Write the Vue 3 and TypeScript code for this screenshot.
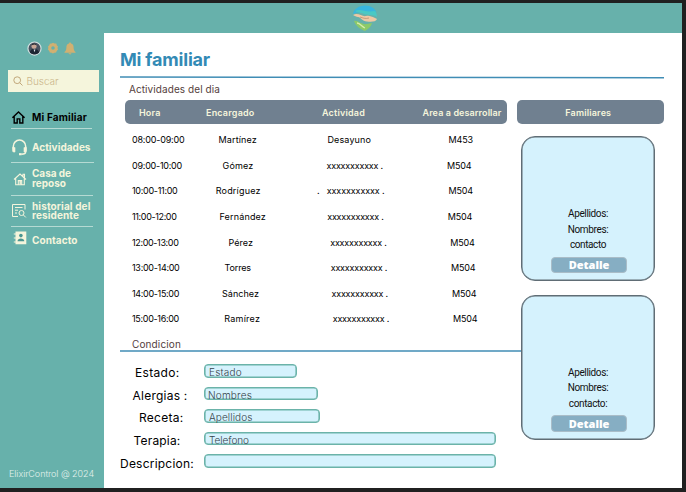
<script setup lang="ts">
interface Cell { text: string; shift: number; width: number }
interface Row { hour: string; hourWidth: number; cells: Cell[] }
interface Field { label: string; inset: number; labelWidth: number; value: string; valueWidth: number; width: number; textInset: number }

// Spreads a label's letters so that it occupies the given width.
const vFit = {
  mounted(el: HTMLElement, binding: { value: number }) {
    const natural = el.getBoundingClientRect().width
    const count = (el.textContent ?? '').length
    if (count > 0) el.style.letterSpacing = `${(binding.value - natural) / count}px`
  },
}

const makeRow = (hour: string, hourWidth: number, name: string, nameShift: number, nameWidth: number,
  activity: string, actShift: number, actWidth: number, area: string, areaShift: number): Row => ({
  hour,
  hourWidth,
  cells: [
    { text: name, shift: nameShift, width: nameWidth },
    { text: activity, shift: actShift, width: actWidth },
    { text: area, shift: areaShift, width: 24.5 },
  ],
})

const x = 'xxxxxxxxxxx .'
const rows: Row[] = [
  makeRow('08:00-09:00', 52.5, 'Martínez', 3.5, 38.5, 'Desayuno', 10.5, 43.5, 'M453', 1.5),
  makeRow('09:00-10:00', 50, 'Gómez', 7.5, 31, x, 9.5, 56.5, 'M504', 0),
  makeRow('10:00-11:00', 45.5, 'Rodríguez', 0.7, 45, '.\u00a0\u00a0\u00a0' + x, 0, 67.5, 'M504', 1.5),
  makeRow('11:00-12:00', 44.5, 'Fernández', 4.5, 46.5, x, 10.2, 56.5, 'M504', 0.7),
  makeRow('12:00-13:00', 46.5, 'Pérez', 13.5, 24.5, x, 13.2, 56.5, 'M504', 3.2),
  makeRow('13:00-14:00', 47.5, 'Torres', 9.5, 26.5, x, 13.7, 56.5, 'M504', 4),
  makeRow('14:00-15:00', 47, 'Sánchez', 7, 37, x, 14.5, 56.5, 'M504', 5),
  makeRow('15:00-16:00', 47, 'Ramírez', 9.2, 36, x, 15.7, 56.5, 'M504', 6),
]

const fields: Field[] = [
  { label: 'Estado:', inset: 15, labelWidth: 44.5, value: 'Estado', valueWidth: 33, width: 93, textInset: 4 },
  { label: 'Alergias :', inset: 12.5, labelWidth: 55, value: 'Nombres', valueWidth: 44, width: 114, textInset: 3 },
  { label: 'Receta:', inset: 19, labelWidth: 44.5, value: 'Apellidos', valueWidth: 43.5, width: 115.5, textInset: 4 },
  { label: 'Terapia:', inset: 13.5, labelWidth: 47, value: 'Telefono', valueWidth: 40, width: 292, textInset: 4 },
  { label: 'Descripcion:', inset: 0, labelWidth: 74, value: '', valueWidth: 0, width: 292, textInset: 4 },
]

const cards = [
  [{ text: 'Apellidos:', width: 40 }, { text: 'Nombres:', width: 40.5 }, { text: 'contacto', width: 36 }],
  [{ text: 'Apellidos:', width: 40 }, { text: 'Nombres:', width: 40.5 }, { text: 'contacto:', width: 38.5 }],
]
</script>

<template>
  <div class="screen">
    <header class="topbar">
      <svg class="logo" viewBox="0 0 28 28">
        <path d="M2 10C3 5 8 1.500 14 1.500c6 0 10 3 11.500 7-6-1-9 2-14 .5C8 8 5 8.500 2 10z" fill="#37b6df" />
        <path d="M4 7c6-3 10 2 20 0 1.500 2 2 4 2 6-4-3-9-1-13-3-3-1.500-7-1.500-9-3z" fill="#49c9c4" />
        <path d="M2 11c5-3 9 2 13 1 3-.8 5 .2 9 2l2 1c-1 3-6 3-10 2.500-5-.5-6-4-9-4.500-2-.4-3-1-5-2z" fill="#efc8a4" />
        <path d="M9 13c3 1 5 2 9 1" fill="none" stroke="#b98f70" stroke-width=".8" />
        <path d="M3 17c4-1 7 4 13 3l5-1c-1 4-4 6-7 8-5-2-9-5-11-10z" fill="#8dca68" />
        <path d="M6 19c3 0 5 4 8 5" fill="none" stroke="#d9edab" stroke-width="1.300" />
      </svg>
    </header>
    <div class="body">
      <aside class="sidebar">
        <div class="tools">
          <svg class="avatar" viewBox="0 0 16 16">
            <circle cx="8" cy="8" r="7" fill="#495260" stroke="#d5e3e3" stroke-width="1.200" />
            <path d="M3 12c1-3 3-4 5-3 3-1 4 1 5 3-2 3-8 3-10 0z" fill="#1c2633" />
            <circle cx="7.500" cy="5.500" r="2.700" fill="#c9a797" />
            <path d="M5 4.500c0-2.500 5-2.500 5 0l-2-.7z" fill="#252932" />
            <path d="M7 9l1 3 1-3z" fill="#dfe5ec" />
          </svg>
          <svg class="gear" viewBox="0 0 12 12">
            <path fill-rule="evenodd" fill="#d1b071" d="M4.500 1.500L6 .7l1.500.8 1.800.1.500 1.700 1.200 1.300-.5 1.400.5 1.600L9.700 9l-.6 1.600-1.700.1L6 11.500l-1.500-.8-1.700-.2L2.300 9 .9 7.500 1.400 6 1 4.500l1.300-1.200.5-1.600zM6 4.200a1.800 1.800 0 1 0 0 3.600 1.800 1.800 0 0 0 0-3.600z" />
          </svg>
          <svg class="bell" viewBox="0 0 12 13">
            <path fill="#d1b071" d="M6 .6c.7 0 1 .5 1 1 2 .5 2.600 2 2.600 3.800 0 2.300.7 3.400 1.900 4.500v.8H.5v-.8c1.200-1.100 1.900-2.200 1.900-4.500C2.400 3.600 3 2.100 5 1.600c0-.5.300-1 1-1zM4.600 11.200h2.800c0 1.600-2.800 1.600-2.800 0z" />
          </svg>
        </div>
        <div class="search">
          <svg viewBox="0 0 10 10"><circle cx="4.200" cy="4.200" r="3.400" /><path d="M6.700 6.700L9.500 9.500" /></svg>
          <span v-fit="32">Buscar</span>
        </div>
        <nav class="nav">
          <a class="item home active">
            <svg viewBox="0 0 16 16" fill="none" stroke="#000" stroke-width="1.500"><path d="M1.500 8.300L8 2.200l6.500 6.100M3.400 7v6.800h3.200V9.500h2.800v4.300h3.200V7" /></svg>
            <span v-fit="55">Mi Familiar</span>
          </a>
          <a class="item activities">
            <svg viewBox="0 0 16 16" fill="none" stroke="#f5f5dc" stroke-width="1.400"><path d="M2.200 9V6.800a5.800 5.800 0 0 1 11.600 0V12q0 2.300-4 2.300" /><path d="M1.400 8h2.400v4.300H2.700q-1.300 0-1.300-1.300zM14.600 8h-2.400v4.300h1.100q1.300 0 1.300-1.300z" fill="#f5f5dc" stroke-width=".5" /><path d="M7.500 14.300h2.500" stroke-width="2" /></svg>
            <span v-fit="58.5">Actividades</span>
          </a>
          <a class="item house">
            <svg viewBox="0 0 14 14" fill="none" stroke="#f5f5dc" stroke-width="1.100"><path d="M1 7.500L7 2l6 5.500M2.700 6.400v6.400h8.600V6.400M5.300 12.500V8.600h3.400v3.900M10 4.300V2.300h1.500v3.500" /><path d="M6.500 9h1.400v3.500H6.500z" fill="#f5f5dc" stroke="none" /></svg>
            <span class="stack"><span v-fit="39">Casa de</span><span v-fit="34">reposo</span></span>
          </a>
          <a class="item history">
            <svg viewBox="0 0 16 16" fill="none" stroke="#f5f5dc" stroke-width="1"><path d="M7 13.500H1.500v-12h12.500v5M4 4.500h7.500M4 7.200h3M4 10h2" /><circle cx="10.500" cy="10" r="2.500" /><path d="M12.300 11.900l2.500 2.500" /></svg>
            <span class="stack"><span v-fit="58.500">historial del</span><span v-fit="47">residente</span></span>
          </a>
          <a class="item contact">
            <svg viewBox="0 0 14 14"><path d="M2.500.5h10.800v12.800H2.500v-1.800H.8v-1h1.700v-3H.8v-1h1.700v-3H.8v-1h1.700z" fill="#f5f5dc" /><circle cx="7.900" cy="4.600" r="1.800" fill="#4a9691" /><path d="M4.500 10.200c0-3.600 6.800-3.600 6.800 0z" fill="#4a9691" /></svg>
            <span v-fit="45.500">Contacto</span>
          </a>
        </nav>
        <footer class="copyright"><span v-fit="85">ElixirControl @ 2024</span></footer>
      </aside>
      <main class="content">
        <h1><span v-fit="90">Mi familiar</span></h1>
        <svg class="title-rule" viewBox="0 0 544 3" preserveAspectRatio="none"><path d="M0 1.100L544 1.700" stroke="#408db5" stroke-width="1.500" /></svg>
        <div class="columns">
          <div class="left">
            <h2 class="day"><span v-fit="91">Actividades del dia</span></h2>
            <div class="table-head">
              <span v-fit="21.500">Hora</span><span v-fit="48.500">Encargado</span><span v-fit="43">Actividad</span><span v-fit="79">Area a desarrollar</span>
            </div>
            <div class="rows">
              <div v-for="row in rows" :key="row.hour" class="row">
                <div><span v-fit="row.hourWidth">{{ row.hour }}</span></div>
                <div v-for="(cell, i) in row.cells" :key="i" :style="{ paddingLeft: cell.shift + 'px' }"><span v-fit="cell.width">{{ cell.text }}</span></div>
              </div>
            </div>
            <h2 class="condition"><span v-fit="49">Condicion</span></h2>
            <svg class="condition-rule" viewBox="0 0 402 2"><path d="M0 1H402" stroke="#408db5" stroke-width="1.500" /></svg>
            <form class="form">
              <div v-for="field in fields" :key="field.label" class="field">
                <label :style="{ paddingLeft: field.inset + 'px' }"><span v-fit="field.labelWidth">{{ field.label }}</span></label>
                <div class="box" :style="{ width: field.width + 'px', paddingLeft: field.textInset + 'px' }"><span v-if="field.value" v-fit="field.valueWidth">{{ field.value }}</span></div>
              </div>
            </form>
          </div>
          <section class="family">
            <div class="family-head"><span v-fit="46">Familiares</span></div>
            <article v-for="(card, i) in cards" :key="i" class="card">
              <p v-for="line in card" :key="line.text"><span v-fit="line.width">{{ line.text }}</span></p>
              <button type="button"><span v-fit="40.500">Detalle</span></button>
            </article>
          </section>
        </div>
      </main>
    </div>
  </div>
</template>

<style>
body { margin: 0; background: #202020; }
</style>

<style scoped>
* { box-sizing: border-box; }
.screen {
  width: 686px; height: 492px; padding: 2.500px 4px 4px 0; background: #202020;
  display: flex; flex-direction: column; overflow: hidden;
  font-family: Inter, "Open Sans", sans-serif; color: #111;
}
span { white-space: pre; }
.topbar { height: 30.500px; flex: none; background: #67b1ab; display: flex; justify-content: center; padding-left: 48px; }
.logo { width: 28px; height: 28px; margin-top: 1px; }
.body { flex: 1; min-height: 0; display: flex; }
.sidebar { width: 104px; flex: none; background: #67b1ab; display: flex; flex-direction: column; }
.tools { height: 30px; display: flex; align-items: center; padding-left: 27px; }
.avatar { width: 15px; height: 15px; }
.gear { width: 12px; height: 12px; margin-left: 5px; }
.bell { width: 12px; height: 13px; margin-left: 5px; }
.search { margin: 7px 0 0 8px; width: 91px; height: 22px; background: #f5f5dc; display: flex; align-items: center; gap: 3.500px; padding-left: 5px; font-size: 10px; font-weight: 300; color: #cbb58b; }
.search svg { width: 10px; height: 10px; fill: none; stroke: #c1a77a; stroke-width: 1; }
.nav { padding: 14px 0 0 11px; }
.item { display: flex; align-items: center; color: #f5f5dc; font-size: 10px; font-weight: 700; line-height: 9.500px; width: 82px; border-bottom: 1px solid #b5dad3; }
.item svg { width: 17px; height: 17px; flex: none; margin-right: 4px; }
.home { height: 22.500px; color: #000; padding-top: 1.500px; width: 81px; }
.home svg { width: 15px; height: 15px; margin-right: 6px; }
.activities { height: 34px; width: 83px; padding-top: 5px; }
.house { height: 33px; }
.house svg { width: 14px; height: 14px; margin: 0 5px 0 2px; }
.history { height: 31px; padding-top: 1px; }
.history svg { width: 16px; height: 16px; margin-right: 5px; }
.contact { height: 28px; border: 0; }
.contact svg { width: 14px; height: 14px; margin: -6px 5px 0 2px; }
.stack { display: flex; flex-direction: column; align-items: flex-start; }
.copyright { margin-top: auto; padding: 0 0 8px 9px; font-size: 9px; line-height: 13px; font-weight: 300; color: #e4f2ed; }
.content { flex: 1; background: #fff; padding: 15px 18px 0 16px; min-width: 0; }
h1 { margin: 0; font-size: 18px; line-height: 24px; font-weight: 700; color: #338ab5; height: 28px; }
.title-rule { width: 544px; height: 3px; display: block; }
.columns { display: flex; }
.left { width: 396.500px; flex: none; }
h2 { margin: 0; font-size: 10px; font-weight: 400; color: #54403d; }
.day { height: 21px; line-height: 20px; padding-left: 9px; }
.table-head { margin-left: 5px; width: 382px; height: 24px; border-radius: 5px; background: #708090; color: #f5f5dc; font-size: 9px; font-weight: 600; display: grid; grid-template-columns: 67px 116px 100.500px 1fr; align-items: center; justify-items: start; padding-left: 14px; }
.rows { padding: 3px 0 0 12px; }
.row { height: 25.570px; display: grid; grid-template-columns: 83px 102px 130px 1fr; align-items: center; font-size: 9px; font-weight: 400; color: #000; }
.condition { height: 18.500px; line-height: 25px; padding-left: 12px; }
.condition-rule { display: block; width: 402px; height: 2px; }
.form { padding-top: 12px; }
.field { display: flex; align-items: center; height: 13.500px; margin-bottom: 9.100px; }
.field label { width: 84px; flex: none; font-size: 12px; line-height: 14px; padding-top: 5px; color: #000; }
.box { height: 13.500px; border: 1px solid #6bb3a9; box-shadow: inset 0 0 0 .6px #6bb3a9; border-radius: 4px; background: #d5f2fd; font-size: 10px; line-height: 15px; font-weight: 300; color: #35424a; }
.family { width: 147.500px; padding-top: 21px; display: flex; flex-direction: column; }
.family-head { height: 24px; border-radius: 5px; background: #708090; color: #f5f5dc; font-size: 9px; font-weight: 600; display: flex; align-items: center; justify-content: center; padding-right: 4px; }
.card { margin: 12px 0 1.500px 4.500px; width: 134px; height: 145px; border: 1px solid #606d75; box-shadow: inset 0 0 0 .5px #606d75; border-radius: 14px; background: #d5f2fd; display: flex; flex-direction: column; align-items: center; padding-top: 69px; position: relative; z-index: 1; }
.card p { margin: 0; height: 15.600px; line-height: 15.600px; font-family: Roboto, sans-serif; font-size: 10px; color: #111; }
button { margin: 4px 0 0 2px; width: 76px; height: 16.500px; padding: 0; border: 1px solid #a9bdc8; border-radius: 4px; background: #86aec3; color: #fff; font: 800 11px/14px "Open Sans", sans-serif; }
</style>
